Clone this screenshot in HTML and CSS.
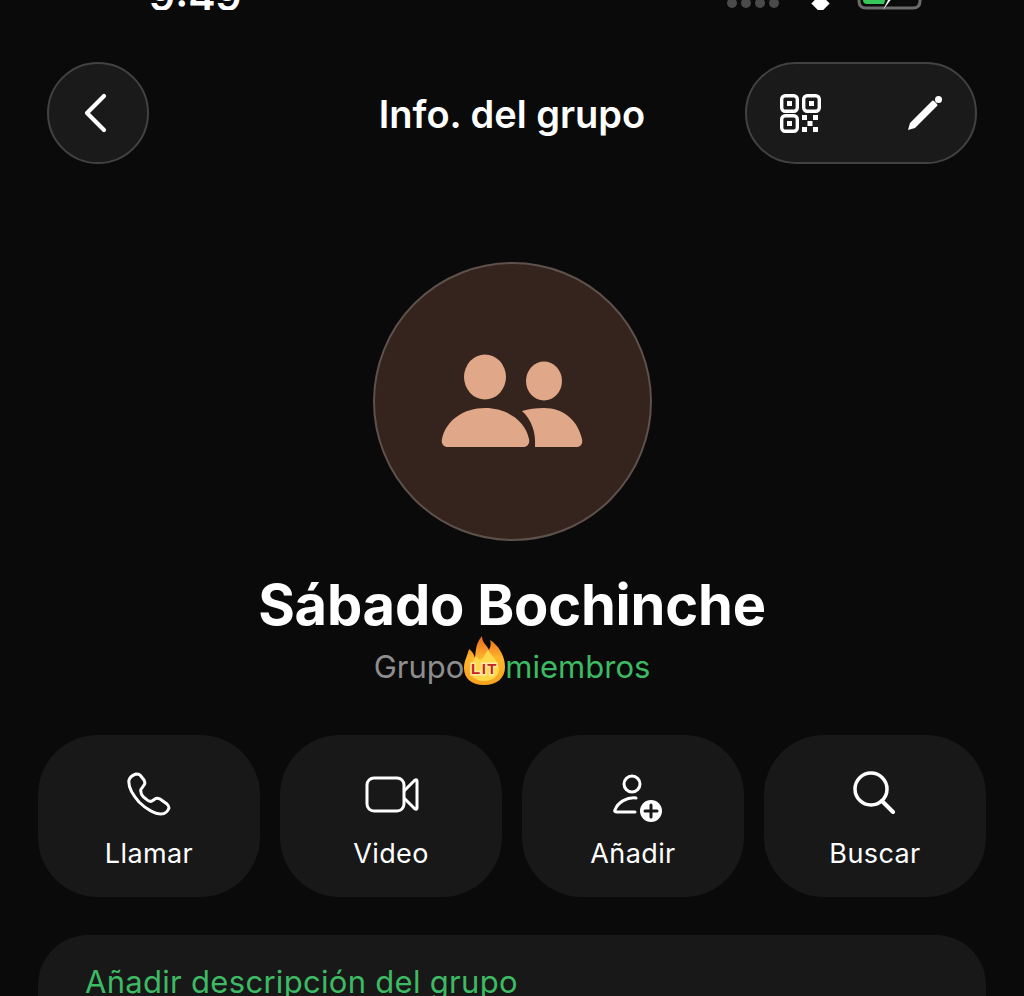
FILE: index.html
```html
<!DOCTYPE html>
<html lang="es">
<head>
  <meta charset="UTF-8">
  <title>Info. del grupo</title>
  <link rel="stylesheet" href="styles.css">
</head>
<body>

  <div class="status">
    <span class="time">9:49</span>
    <div class="signal"><i></i><i></i><i></i><i></i></div>
    <div class="wifi"></div>
    <svg class="battery" width="66" height="12" viewBox="0 0 66 12">
      <path d="M2 -10 V3 Q2 10 9 10 H56 Q63 10 63 3 V-10" fill="none" stroke="#6b6b6b" stroke-width="3"/>
      <path d="M6 -10 V2 Q6 6 10 6 H27 L32 -10 Z" fill="#35c759"/>
      <path d="M33 -2 L26 12 L36 -1 L38 -8 Z" fill="#fff"/>
    </svg>
  </div>

  <header class="topbar">
    <button class="round-btn">
      <svg width="24" height="40" viewBox="0 0 24 40"><path d="M21 3 L4 20 L21 37" fill="none" stroke="#fff" stroke-width="4.2" stroke-linecap="round" stroke-linejoin="round"/></svg>
    </button>
    <h1>Info. del grupo</h1>
    <div class="pill">
      <svg width="41" height="39" viewBox="0 0 41 39" fill="none" stroke="#fff" stroke-width="3.400">
        <rect x="1.700" y="1.700" width="15.600" height="15.600" rx="3.500"/>
        <rect x="23.700" y="1.700" width="15.600" height="15.600" rx="3.500"/>
        <rect x="1.700" y="21.700" width="15.600" height="15.600" rx="3.500"/>
        <g fill="#fff" stroke="none">
          <rect x="7" y="7" width="5" height="5"/><rect x="29" y="7" width="5" height="5"/><rect x="7" y="27" width="5" height="5"/>
          <rect x="22" y="21" width="5" height="5"/><rect x="33" y="21" width="5" height="5"/>
          <rect x="27.500" y="27" width="5" height="5"/>
          <rect x="22" y="33" width="5" height="5"/><rect x="33" y="33" width="5" height="5"/>
        </g>
      </svg>
      <svg width="36" height="36" viewBox="0 0 36 36">
        <path d="M1 35 L3 28 L25 6 Q26 5 27 6 L30 9 Q31 10 30 11 L8 33 Z" fill="#fff"/>
        <circle cx="31.500" cy="4.500" r="3.500" fill="#fff"/>
      </svg>
    </div>
  </header>

  <section class="profile">
    <div class="avatar">
      <svg width="144" height="96" viewBox="0 0 144 96" fill="#e0a888">
        <ellipse cx="45" cy="24" rx="21" ry="22.500"/>
        <ellipse cx="104" cy="28" rx="18" ry="19.500"/>
        <path d="M8 94 H83 C88 94 90 90 89 86 C85 67 66 55 45 55 C24 55 6 67 2 86 C1 90 3 94 8 94 Z"/>
        <path d="M82 58 C88 56 96 55 104 55 C124 55 138 68 142 86 C143 90 141 94 137 94 H95 C96 80 92 67 82 58 Z"/>
      </svg>
    </div>
    <h2>Sábado Bochinche</h2>
    <p class="meta">
      <span class="grey">Grupo</span>
      <svg class="flame" width="43" height="50" viewBox="0 0 43 50">
        <defs>
          <linearGradient id="flameFill" x1="0" y1="0" x2="0" y2="1">
            <stop offset="0" stop-color="#e8661a"/>
            <stop offset="0.45" stop-color="#ffb52e"/>
            <stop offset="1" stop-color="#f7a21f"/>
          </linearGradient>
        </defs>
        <path d="M21 49 C8 49 1 42 1 32 C1 25 4 21 6 13 C9 15 11 18 12 22 C13 13 13 7 19 0 C19 7 24 9 26 14 C28 10 28 7 27 4 C35 9 42 19 42 31 C42 42 34 49 21 49 Z" fill="url(#flameFill)"/>
        <path d="M21 45 C12 45 6 39 7 32 C8 27 11 24 13 20 C15 24 17 25 20 22 C22 19 23 16 25 14 C27 18 35 24 36 33 C36 40 30 45 21 45 Z" fill="#ffd84a"/>
        <text x="21.500" y="38" text-anchor="middle" class="lit">LIT</text>
      </svg>
      <span class="green">miembros</span>
    </p>
  </section>

  <div class="actions">
    <button class="action">
      <svg width="44" height="44" viewBox="0 0 44 44"><path d="M9 2 C6 3 3 5 2 8 C1 14 5 22 12 30 C19 37 28 42 34 42 C38 42 41 39 42 36 C42 34 41 33 40 32 L33 27 C31 26 29 26 28 27 L25 29 C23 30 21 29 19 27 C16 25 14 22 14 20 C13 18 14 17 15 16 L17 13 C18 12 18 10 17 8 L13 3 C12 2 11 2 9 2 Z" fill="none" stroke="#fff" stroke-width="3" stroke-linejoin="round"/></svg>
      <span>Llamar</span>
    </button>
    <button class="action">
      <svg class="video-icon" width="54" height="44" viewBox="0 0 54 44" fill="none" stroke="#fff" stroke-width="3" stroke-linejoin="round"><rect x="2" y="6" width="37" height="33" rx="7"/><path d="M39 19 L50 8 Q52 7 52 9 V36 Q52 38 50 37 L39 26"/></svg>
      <span>Video</span>
    </button>
    <button class="action">
      <svg class="add-icon" width="50" height="49" viewBox="0 0 50 49">
        <g fill="none" stroke="#fff" stroke-width="3" stroke-linecap="round">
          <circle cx="19" cy="11" r="8"/>
          <path d="M23 25 C14 24 5 29 2 37 Q1 39 4 39 H22"/>
        </g>
        <circle cx="38" cy="38" r="11" fill="#fff"/>
        <path d="M38 32 V44 M32 38 H44" stroke="#181818" stroke-width="3" stroke-linecap="round"/>
      </svg>
      <span>Añadir</span>
    </button>
    <button class="action">
      <svg class="search-icon" width="44" height="44" viewBox="0 0 44 44" fill="none" stroke="#fff" stroke-width="3.500" stroke-linecap="round"><circle cx="19" cy="19" r="16"/><path d="M30 31 L41 42" stroke-width="4"/></svg>
      <span>Buscar</span>
    </button>
  </div>

  <div class="desc">Añadir descripción del grupo</div>

</body>
</html>
```

FILE: styles.css
```css
html, body {
  height: 996px;
  overflow: hidden;
}

body {
  margin: 0;
  background: #0a0a0a;
  color: #fff;
  font-family: Inter, "Noto Sans", sans-serif;
}

button {
  font-family: inherit;
  color: inherit;
  border: 0;
}

/* status bar, only its bottom edge is visible */
.status {
  height: 10px;
  overflow: hidden;
  display: flex;
  align-items: flex-end;
  padding-left: 149px;
}

.time {
  font-size: 41px;
  font-weight: 600;
  line-height: 1;
  margin-bottom: -7px;
  width: 91px;
}

.signal {
  display: flex;
  gap: 4px;
  margin-left: 487px;
  margin-bottom: 2px;
}

.signal i {
  width: 10px;
  height: 10px;
  border-radius: 50%;
  background: #4a4a4a;
}

.wifi {
  width: 13px;
  height: 13px;
  margin-left: 35px;
  margin-bottom: 0;
  background: #fff;
  transform: rotate(45deg);
}

.battery {
  margin-left: 30px;
}

.topbar {
  display: grid;
  grid-template-columns: 232px 1fr 232px;
  align-items: center;
  margin: 52px 47px 0;
  height: 102px;
}

.round-btn {
  width: 102px;
  height: 102px;
  padding: 0 6px 0 0;
  border-radius: 50%;
  background: #1a1a1a;
  border: 2px solid #424242;
  display: flex;
  align-items: center;
  justify-content: center;
  box-sizing: border-box;
}

.topbar h1 {
  margin: 2px 0 0;
  text-align: center;
  font-size: 38px;
  font-weight: 600;
}

.pill {
  height: 102px;
  box-sizing: border-box;
  border-radius: 51px;
  background: #1a1a1a;
  border: 2px solid #424242;
  display: flex;
  align-items: center;
  justify-content: space-between;
  padding: 0 32px 0 33px;
}

.profile {
  display: flex;
  flex-direction: column;
  align-items: center;
  margin-top: 98px;
}

.avatar {
  width: 279px;
  height: 279px;
  box-sizing: border-box;
  border-radius: 50%;
  background: #35241d;
  border: 2px solid #5e514b;
  padding-bottom: 2px;
  display: flex;
  align-items: center;
  justify-content: center;
}

.profile h2 {
  margin: 30px 0 0;
  font-size: 56px;
  font-weight: 700;
  line-height: 68px;
  letter-spacing: -0.2px;
}

.meta {
  display: flex;
  align-items: center;
  justify-content: center;
  margin: 2px 0 0;
  height: 50px;
  font-size: 31px;
}

.grey {
  color: #8e8e8e;
}

.green {
  color: #3dba63;
}

.flame {
  margin: -11px -1px 0 -1px;
}

.lit {
  font-family: "Liberation Sans", sans-serif;
  font-size: 15px;
  font-weight: 700;
  fill: #c4261c;
  stroke: #ffe9a0;
  stroke-width: 3px;
  paint-order: stroke;
  letter-spacing: 1.500px;
}

.actions {
  display: grid;
  grid-template-columns: repeat(4, 222px);
  gap: 20px;
  margin: 44px 0 0 38px;
}

.action {
  height: 162px;
  border-radius: 60px;
  background: #181818;
  padding: 37px 0 0;
  display: flex;
  flex-direction: column;
  align-items: center;
  justify-content: flex-start;
  font-size: 27px;
  letter-spacing: 0.4px;
}

.action span {
  margin-top: 21px;
  line-height: 33px;
}

.video-icon {
  margin-left: 2px;
}

.add-icon {
  margin: 1px 0 -6px 9px;
}

.search-icon {
  margin: -2px 2px 2px 0;
}

.desc {
  margin: 38px 38px 0;
  height: 200px;
  padding: 27px 47px;
  border-radius: 50px;
  background: #181818;
  color: #3dba63;
  font-size: 31px;
  line-height: 40px;
  letter-spacing: 0.3px;
}
```
